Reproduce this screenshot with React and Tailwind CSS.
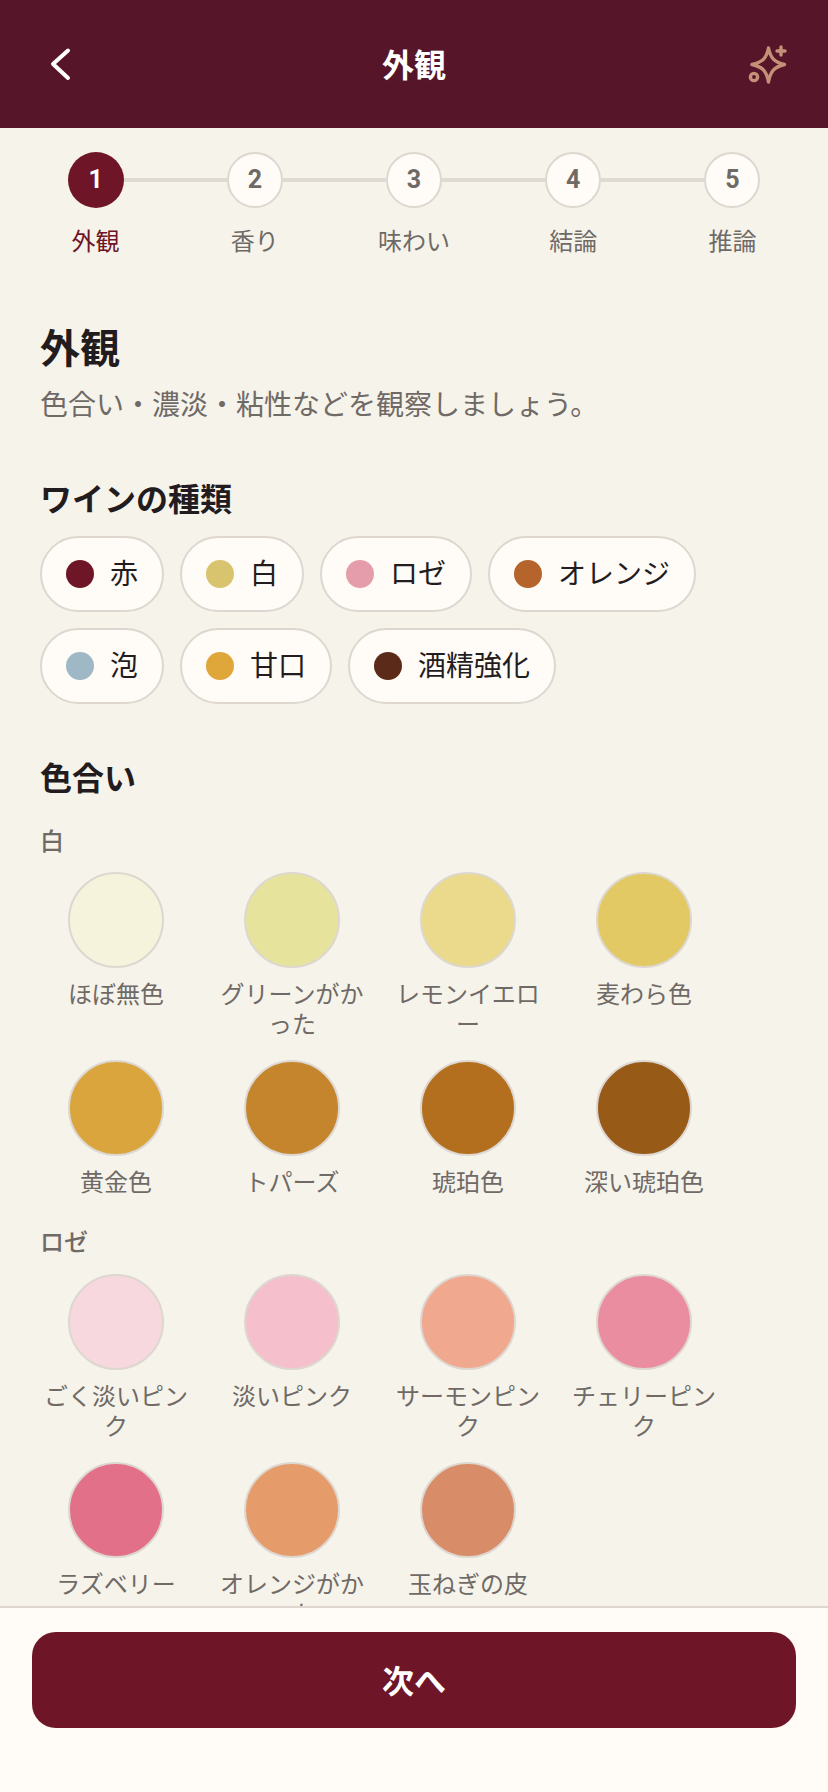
import React from "react";

const steps = ["外観", "香り", "味わい", "結論", "推論"];

const wineTypes = [
  [
    { label: "赤", color: "bg-[#6e1628]" },
    { label: "白", color: "bg-[#d8c46e]" },
    { label: "ロゼ", color: "bg-[#e59dab]" },
    { label: "オレンジ", color: "bg-[#b5652b]" },
  ],
  [
    { label: "泡", color: "bg-[#9fb8c6]" },
    { label: "甘口", color: "bg-[#dfa63a]" },
    { label: "酒精強化", color: "bg-[#5c2a18]" },
  ],
];

const whites = [
  { label: "ほぼ無色", color: "bg-[#f5f3dc]" },
  { label: "グリーンがかった", color: "bg-[#e6e49c]" },
  { label: "レモンイエロー", color: "bg-[#ebda8c]" },
  { label: "麦わら色", color: "bg-[#e2c964]" },
  { label: "黄金色", color: "bg-[#d9a53c]" },
  { label: "トパーズ", color: "bg-[#c4852c]" },
  { label: "琥珀色", color: "bg-[#b36f1e]" },
  { label: "深い琥珀色", color: "bg-[#985a17]" },
];

const roses = [
  { label: "ごく淡いピンク", color: "bg-[#f7d8df]" },
  { label: "淡いピンク", color: "bg-[#f5c0cc]" },
  { label: "サーモンピンク", color: "bg-[#f0a98e]" },
  { label: "チェリーピンク", color: "bg-[#ea8da0]" },
  { label: "ラズベリー", color: "bg-[#e27089]" },
  { label: "オレンジがかった", color: "bg-[#e69b6a]" },
  { label: "玉ねぎの皮", color: "bg-[#d98c68]" },
];

function Swatches({ items }) {
  return (
    <div className="grid grid-cols-[repeat(4,152px)] gap-x-6 gap-y-5">
      {items.map((item) => (
        <div key={item.label} className="flex flex-col items-center gap-3">
          <div className={`${item.color} w-24 h-24 rounded-full border-2 border-[#ddd7d0]`} />
          <span className="w-full text-center text-[24px] leading-[30px] text-[#6f6a66]">{item.label}</span>
        </div>
      ))}
    </div>
  );
}

export default function App() {
  return (
    <div
      lang="ja"
      className="flex flex-col h-[1792px] overflow-hidden bg-[#f6f3eb] font-['Inter','Noto_Sans_CJK_JP',sans-serif]"
    >
      <header className="flex items-center justify-between shrink-0 h-32 px-[35px] bg-[#561528]">
        <div className="w-[100px]">
          <svg width="40" height="40" viewBox="0 0 40 40" fill="none" stroke="#ffffff" strokeWidth="4" strokeLinecap="round" strokeLinejoin="round">
            <path d="M33 6.5 L18 20 L33 34" />
          </svg>
        </div>
        <h1 className="pt-[3px] text-[32px] leading-10 font-bold text-white">外観</h1>
        <div className="flex justify-end w-[100px]">
          <svg width="48" height="48" viewBox="0 0 48 48" fill="none" stroke="#c49078" strokeWidth="3.4" strokeLinecap="round" strokeLinejoin="round">
            <path d="M23.5 8 C25.5 18 29 22 39.5 24.5 C29 27 25.5 31 23.5 42 C21.5 31 18 27 7 24.5 C18 22 21.5 18 23.5 8 Z" />
            <path d="M36 7 V15 M32 11 H40" />
            <circle cx="9" cy="37" r="3.6" />
          </svg>
        </div>
      </header>

      <main className="flex-1 min-h-0 overflow-hidden">
        <div className="grid grid-cols-5 px-4 pt-6">
          {steps.map((step, i) => (
            <div key={step} className="flex flex-col items-center">
              <div className="flex items-center w-full">
                <div className={`flex-1 h-1 ${i === 0 ? "" : "bg-[#e0dad4]"}`} />
                {i === 0 ? (
                  <div className="flex items-center justify-center w-14 h-14 rounded-full bg-[#6e1628] font-['Roboto'] text-[25px] font-bold text-white">1</div>
                ) : (
                  <div className="flex items-center justify-center w-14 h-14 rounded-full border-2 border-[#ddd7d0] bg-[#fffbf6] font-['Roboto'] text-[25px] font-bold text-[#6f6a66]">{i + 1}</div>
                )}
                <div className={`flex-1 h-1 ${i === 4 ? "" : "bg-[#e0dad4]"}`} />
              </div>
              <span className={`mt-[18px] text-[24px] leading-8 ${i === 0 ? "text-[#6e1628]" : "text-[#6f6a66]"}`}>{step}</span>
            </div>
          ))}
        </div>

        <div className="px-10 pt-[63px]">
          <h2 className="text-[40px] leading-[56px] font-bold text-[#231c1e]">外観</h2>
          <p className="mt-2 text-[28px] leading-10 text-[#6f6a66]">色合い・濃淡・粘性などを観察しましょう。</p>

          <h3 className="mt-[55px] text-[32px] leading-10 font-bold text-[#231c1e]">ワインの種類</h3>
          <div className="flex flex-col gap-4 mt-4">
            {wineTypes.map((row, i) => (
              <div key={i} className="flex gap-4">
                {row.map((type) => (
                  <div key={type.label} className="flex items-center gap-4 h-[76px] px-6 rounded-full border-2 border-[#ddd7d0] bg-[#fffbf6]">
                    <span className={`${type.color} w-7 h-7 rounded-full`} />
                    <span className="text-[28px] leading-9 text-[#231c1e]">{type.label}</span>
                  </div>
                ))}
              </div>
            ))}
          </div>

          <h3 className="mt-[55px] text-[32px] leading-10 font-bold text-[#231c1e]">色合い</h3>
          <p className="mt-7 text-[24px] leading-[30px] font-medium text-[#6f6a66]">白</p>
          <div className="mt-[15px]">
            <Swatches items={whites} />
          </div>
          <p className="mt-[30px] text-[24px] leading-[30px] font-medium text-[#6f6a66]">ロゼ</p>
          <div className="mt-4">
            <Swatches items={roses} />
          </div>
        </div>
      </main>

      <footer className="shrink-0 h-[186px] px-8 pt-6 border-t-2 border-[#ddd7d0] bg-[#fffbf6]">
        <button type="button" className="w-full h-24 pt-1 rounded-3xl bg-[#6e1628] text-[32px] font-bold text-white">次へ</button>
      </footer>
    </div>
  );
}
